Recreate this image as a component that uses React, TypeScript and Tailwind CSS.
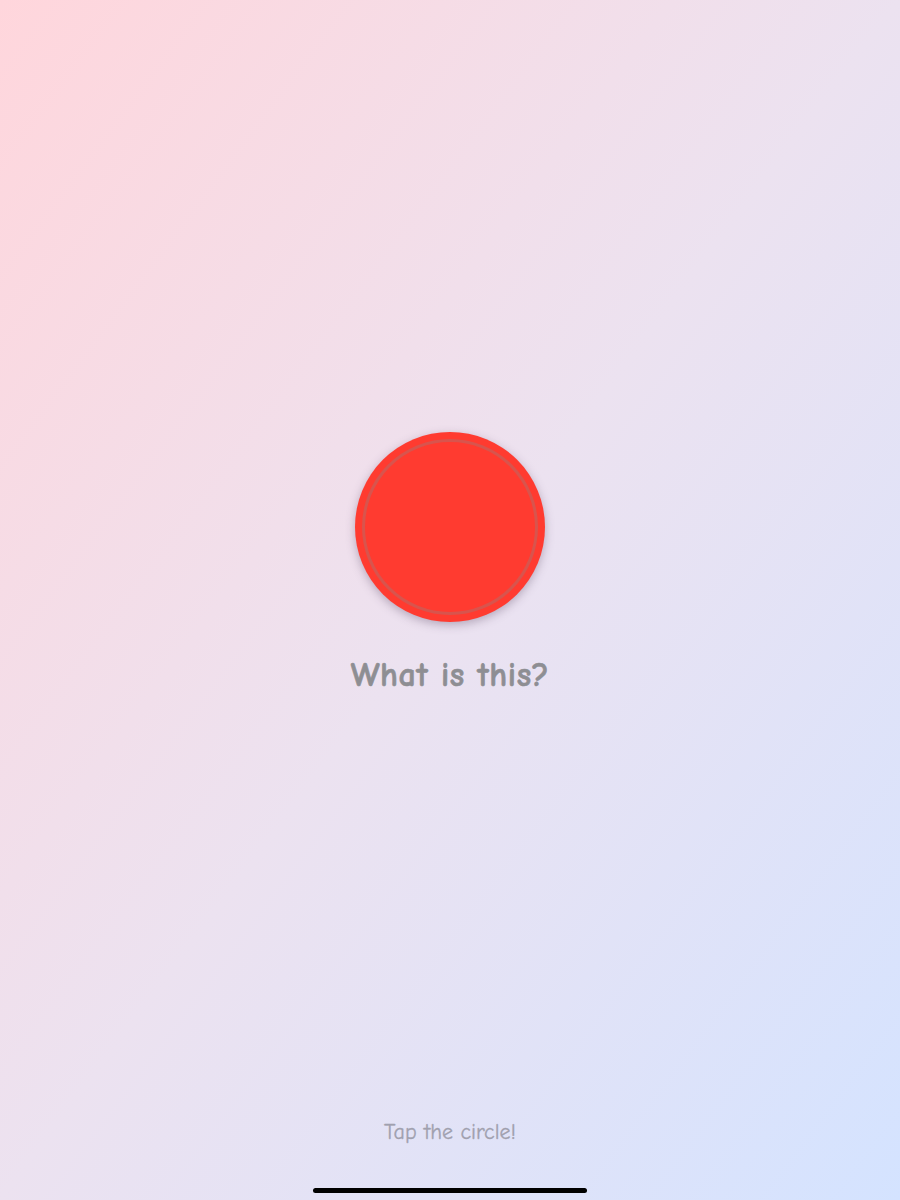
export default function App() {
  return (
    <div
      className="relative flex h-[1200px] w-[900px] flex-col items-center bg-gradient-to-br from-[#ffd6dc] via-[#ece2f0] to-[#d4e3ff]"
      style={{ fontFamily: '"Comic Sans MS", "Comic Neue", "DejaVu Sans", sans-serif' }}
    >
      <div className="flex flex-1 flex-col items-center justify-center pt-[6px]">
        <div className="flex h-[190px] w-[190px] items-center justify-center rounded-full bg-[#ff3b30] shadow-[0_3px_10px_rgba(80,60,90,0.35)]">
          <div className="h-[176px] w-[176px] rounded-full border-[3px] border-[#c8605a]/70" />
        </div>
        <div className="mt-[34px] text-[34px] font-black leading-[38px] tracking-[0.6px] text-[#8e8e93] [-webkit-text-stroke:0.6px_#8e8e93]">
          What is this?
        </div>
      </div>
      <div className="mb-[55px] text-[22px] leading-[26px] text-[#a0a0ae] [-webkit-text-stroke:0.3px_#a0a0ae]">
        Tap the circle!
      </div>
      <div className="absolute bottom-[7px] left-1/2 h-[5px] w-[274px] -translate-x-1/2 rounded-full bg-black" />
    </div>
  );
}
